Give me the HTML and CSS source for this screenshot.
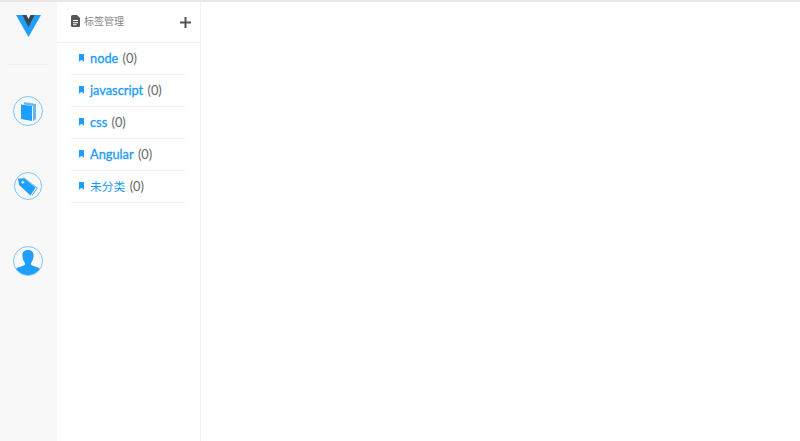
FILE: index.html
```html
<!DOCTYPE html>
<html lang="zh-CN">
<head>
  <meta charset="UTF-8">
  <title>标签管理</title>
  <link rel="stylesheet" href="styles.css">
</head>
<body>
  <div class="app">
    <!-- 左侧导航 -->
    <nav class="sidebar">
      <div class="logo">
        <svg width="25" height="22" viewBox="0 0 25 22">
          <path d="M0 0H6L12.5 12L19 0H25L12.5 22Z" fill="#1e9fff"/>
          <path d="M6 0H10.5L12.5 4L14.5 0H19L12.5 12.5Z" fill="#35495e"/>
        </svg>
      </div>
      <a class="nav-item nav-book">
        <svg width="15" height="19" viewBox="0 0 15 19">
          <path d="M3 0L15 2V17L12 19V4L3 2.5Z" fill="#1e9fff" opacity="0.7"/>
          <path d="M0 2.5L11 4V19L0 17Z" fill="#1e9fff"/>
        </svg>
      </a>
      <a class="nav-item nav-tag">
        <svg width="20" height="19" viewBox="0 0 20 19">
          <path d="M6 0.5L20 11L14.5 18.5L13.8 17.8L18.7 11L5 1Z" fill="#1e9fff" opacity="0.7"/>
          <path d="M0 1.5H6L17.5 10.5L12.5 18.5L1 8Z" fill="#1e9fff"/>
          <path d="M3.3 4.7H4.3V3.7H5.3V4.7H6.3V5.7H5.3V6.7H4.3V5.7H3.3Z" fill="#fff"/>
        </svg>
      </a>
      <a class="nav-item nav-user">
        <svg width="28" height="26" viewBox="0 0 28 26">
          <path d="M14 1C18.5 1 20 4 19.5 7.5C19.3 10.5 18.2 12.5 17 14V15.5C19 17.5 24 17.5 27 20.5C25 24 19.5 26 14 26C8.5 26 3 24 1 20.5C4 17.5 9 17.5 11 15.5V14C9.8 12.5 8.7 10.5 8.5 7.5C8 4 9.5 1 14 1Z" fill="#1e9fff"/>
        </svg>
      </a>
    </nav>

    <!-- 标签列表 -->
    <section class="tag-panel">
      <header class="panel-head">
        <div class="panel-title">
          <svg class="doc-icon" width="9" height="12" viewBox="0 0 9 12">
            <path d="M1.5 0H6L9 3V10.5Q9 12 7.5 12H1.5Q0 12 0 10.5V1.5Q0 0 1.5 0Z" fill="#555"/>
            <path d="M2 5H7V6H2ZM2 7.2H7V8.2H2ZM2 9.3H5.5V10.2H2Z" fill="#fff"/>
          </svg>
          <span>标签管理</span>
        </div>
        <svg class="add-icon" width="11" height="11" viewBox="0 0 11 11">
          <path d="M4.5 0H6.5V4.5H11V6.5H6.5V11H4.5V6.5H0V4.5H4.5Z" fill="#555"/>
        </svg>
      </header>
      <ul class="tag-list">
        <li class="tag-row"><svg class="mark" width="5" height="8" viewBox="0 0 5 8"><path d="M0 0H5V8L2.5 5.8L0 8Z"/></svg><span class="tag-name">node</span> (0)</li>
        <li class="tag-row"><svg class="mark" width="5" height="8" viewBox="0 0 5 8"><path d="M0 0H5V8L2.5 5.8L0 8Z"/></svg><span class="tag-name">javascript</span> (0)</li>
        <li class="tag-row"><svg class="mark" width="5" height="8" viewBox="0 0 5 8"><path d="M0 0H5V8L2.5 5.8L0 8Z"/></svg><span class="tag-name">css</span> (0)</li>
        <li class="tag-row"><svg class="mark" width="5" height="8" viewBox="0 0 5 8"><path d="M0 0H5V8L2.5 5.8L0 8Z"/></svg><span class="tag-name">Angular</span> (0)</li>
        <li class="tag-row"><svg class="mark" width="5" height="8" viewBox="0 0 5 8"><path d="M0 0H5V8L2.5 5.8L0 8Z"/></svg><span class="tag-name tag-cjk">未分类</span> (0)</li>
      </ul>
    </section>

    <main class="content"></main>
  </div>
</body>
</html>
```

FILE: styles.css
```css
* {
  margin: 0;
  padding: 0;
  box-sizing: border-box;
}

html, body {
  height: 100%;
  overflow: hidden;
}

body {
  font-family: Lato, "Noto Sans CJK SC", sans-serif;
  background: #fff;
  color: #666;
}

.app {
  display: flex;
  height: 100%;
  border-top: 2px solid #e8e8e8;
}

.sidebar {
  width: 57px;
  padding-right: 1px;
  background: #f8f8f8;
  display: flex;
  flex-direction: column;
  align-items: center;
  flex-shrink: 0;
}

.logo {
  width: 40px;
  height: 63px;
  padding-top: 13px;
  display: flex;
  justify-content: center;
  align-items: flex-start;
  border-bottom: 1px solid #eee;
}

.nav-item {
  width: 30px;
  height: 30px;
  border: 1px solid #7cc4ff;
  border-radius: 50%;
  display: flex;
  align-items: center;
  justify-content: center;
  overflow: hidden;
  margin-bottom: 45px;
}

.nav-book {
  margin-top: 31px;
}

.nav-tag {
  width: 28px;
  height: 28px;
  margin-top: 1px;
  margin-bottom: 46px;
}

.nav-user {
  align-items: flex-end;
}

.tag-panel {
  width: 144px;
  border-right: 1px solid #f2f2f2;
  flex-shrink: 0;
}

.panel-head {
  height: 41px;
  padding: 0 9px 0 13px;
  display: flex;
  align-items: center;
  justify-content: space-between;
  border-bottom: 1px solid #f2f2f2;
}

.panel-title {
  display: flex;
  align-items: center;
  gap: 4px;
  font-size: 10px;
  color: #888;
  margin-top: -3px;
}

.doc-icon {
  margin-left: 1px;
}

.add-icon {
  margin-top: 1px;
}

.tag-list {
  list-style: none;
  margin: 0 14px 0 13px;
}

.tag-row {
  height: 32px;
  padding-bottom: 2px;
  display: flex;
  align-items: center;
  white-space: pre;
  font-size: 12.8px;
  border-bottom: 1px solid #f2f2f2;
}

.mark {
  fill: #1e9fff;
  margin: 1px 6px 0 9px;
}

.tag-name {
  color: #1a9bfc;
  -webkit-text-stroke: 0.3px #1a9bfc;
  margin-right: 1px;
}

.tag-cjk {
  font-size: 11.8px;
  -webkit-text-stroke: 0;
}
```
